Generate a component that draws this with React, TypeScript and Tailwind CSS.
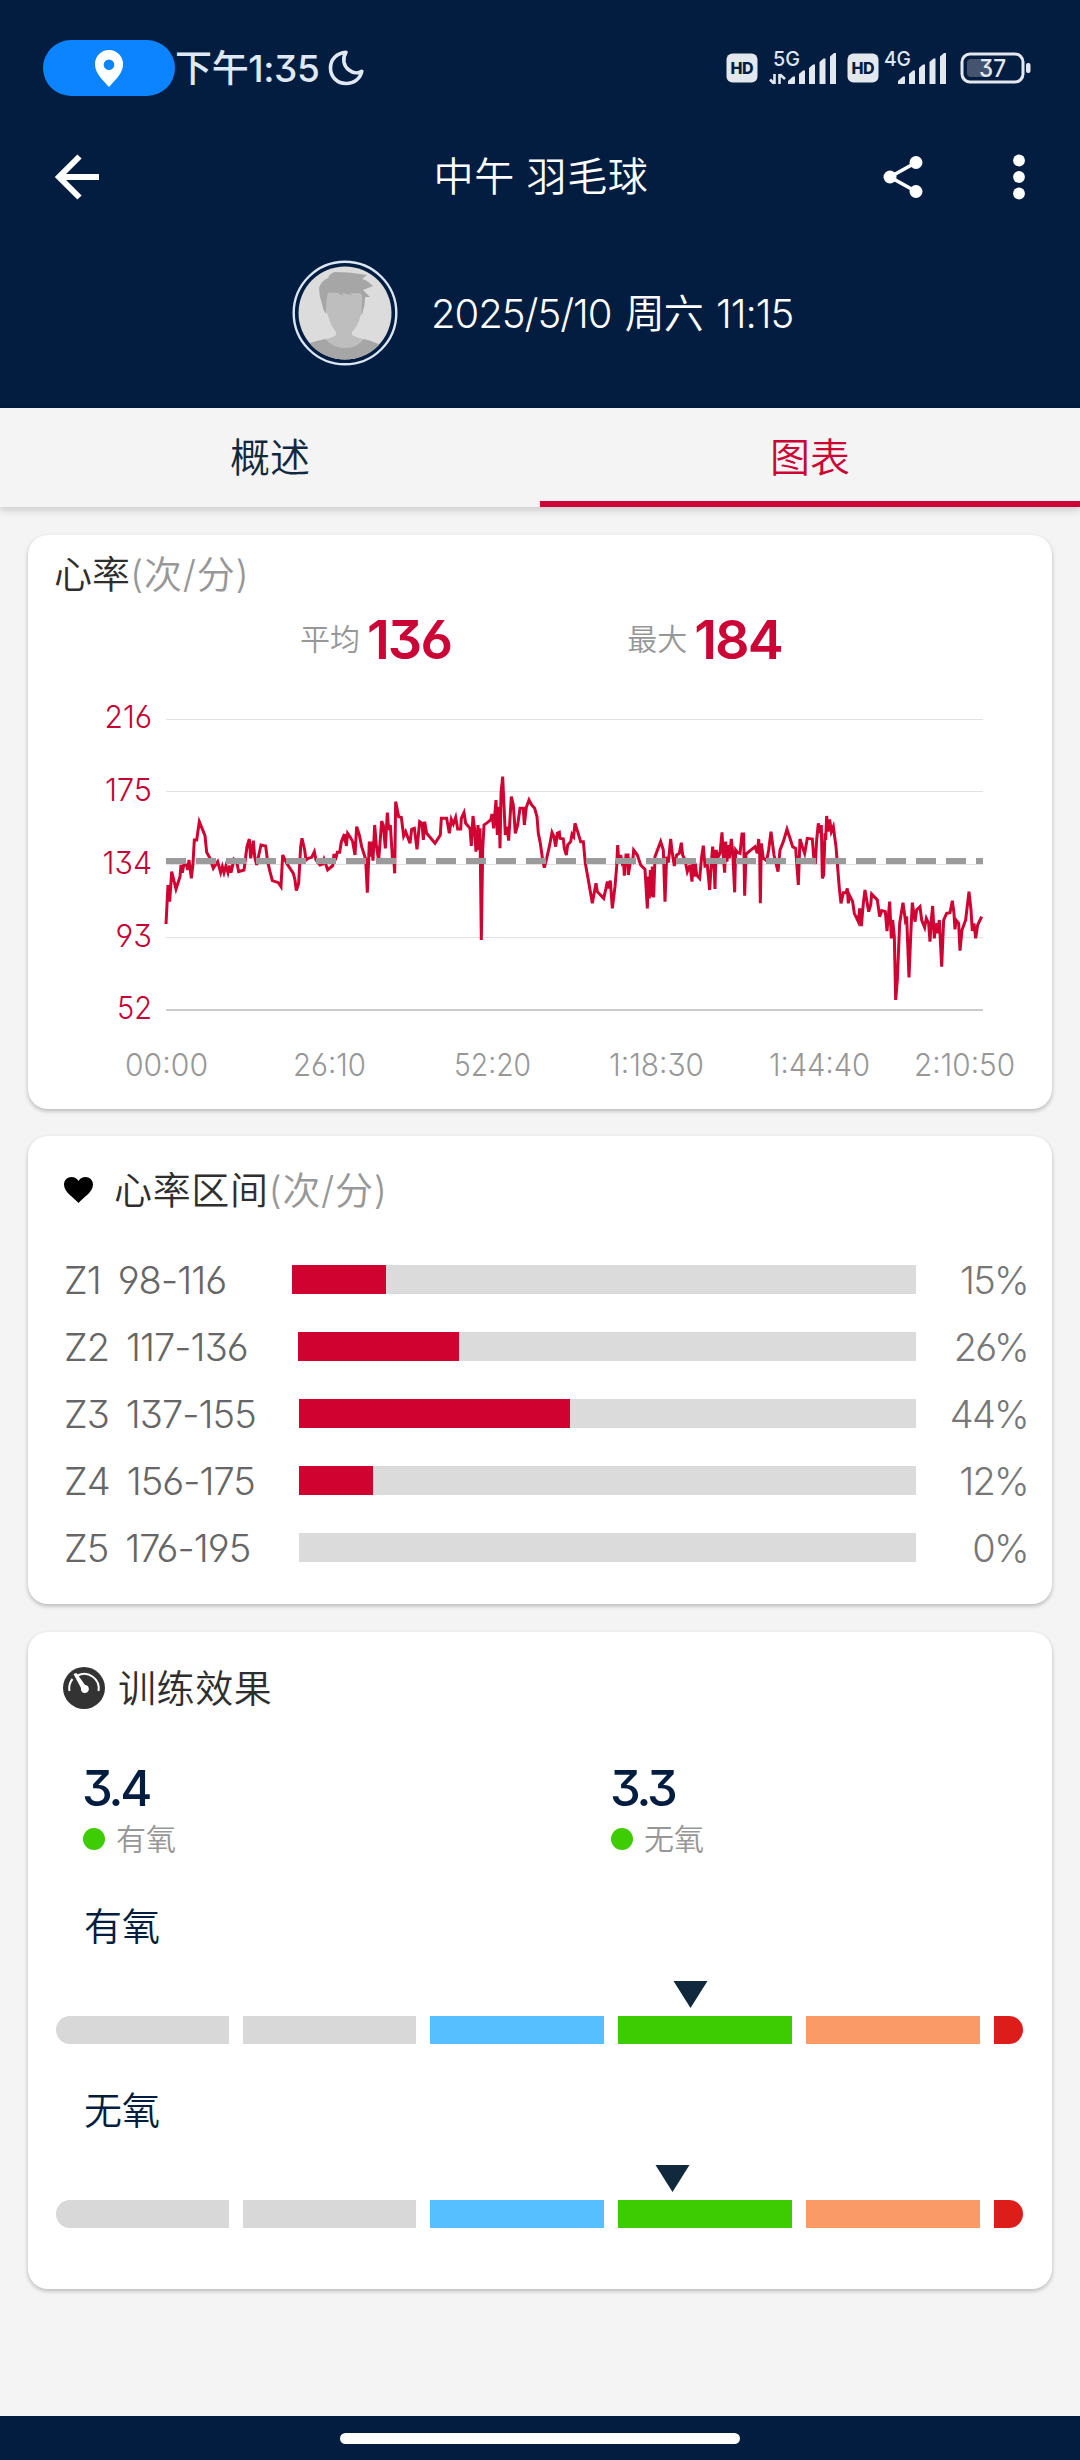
import React from 'react';

const zones = [
  { name: 'Z1', range: '98-116', percent: 15, gap: 'ml-[33px]' },
  { name: 'Z2', range: '117-136', percent: 26, gap: 'ml-[39px]' },
  { name: 'Z3', range: '137-155', percent: 44, gap: 'ml-10' },
  { name: 'Z4', range: '156-175', percent: 12, gap: 'ml-10' },
  { name: 'Z5', range: '176-195', percent: 0, gap: 'ml-10' }
];

const yTicks = [
  { label: '216', line: 719.5, base: 728, width: 47.5 },
  { label: '175', line: 791.5, base: 801, width: 47 },
  { label: '134', line: 864.5, base: 874, width: 49.5 },
  { label: '93', line: 937.5, base: 947, width: 36.5 },
  { label: '52', line: 1010, base: 1019, width: 35 }
];

const xTicks = [
  { label: '00:00', x: 125, width: 83 },
  { label: '26:10', x: 293, width: 73 },
  { label: '52:20', x: 454, width: 77 },
  { label: '1:18:30', x: 609, width: 95 },
  { label: '1:44:40', x: 769, width: 101 },
  { label: '2:10:50', x: 914, width: 101 }
];

// heart rate samples, three units per pixel
const heartRate = `
198,702 204,585 209,635 215,545 228,597 240,560 243,525 247,548 252,522 260,525 263,540 267,510 274,565 279,520
283,450 290,450 298,395 315,437 320,487 330,505 340,535 353,515 362,548 367,530 372,548 378,527 384,548 389,527
393,548 402,508 410,515 416,545 432,540 441,470 448,447 452,505 460,452 464,500 470,525 483,465 497,468 503,515
510,545 517,572 535,578 543,590 548,495 560,520 580,550 585,570 589,602 596,580 602,470 606,445 614,480 618,510
625,505 635,502 643,485 648,510 660,525 668,522 672,508 678,525 683,540 698,527 702,492 706,510 712,487 719,487
724,455 730,440 734,450 737,432 739,468 743,430 750,440 758,455 765,495 770,410 778,435 785,470 797,508 802,608
808,455 811,500 814,455 819,512 824,405 829,465 836,512 845,393 850,405 856,475 862,368 866,420 871,405 878,515
880,480 884,550 887,335 896,380 904,382 911,438 917,425 930,460 935,418 943,415 951,478 959,395 966,400 970,450
974,395 980,430 1005,460 1021,435 1024,385 1040,385 1048,430 1054,388 1060,402 1067,382 1073,417 1082,417
1084,385 1092,368 1097,400 1110,415 1114,468 1119,378 1123,410 1128,485 1134,405 1137,480 1140,415 1144,750
1148,480 1152,405 1162,398 1172,390 1176,372 1181,415 1188,330 1192,435 1197,350 1200,475 1203,310 1208,260
1216,435 1221,410 1226,452 1234,320 1240,345 1246,430 1253,405 1260,355 1270,355 1273,405 1279,352 1287,330
1295,345 1304,355 1311,380 1315,430 1321,460 1328,510 1333,533 1340,505 1348,470 1356,427 1362,440 1367,470
1372,430 1378,427 1380,445 1390,447 1393,475 1399,495 1403,465 1412,455 1416,433 1421,440 1425,400 1433,425
1442,455 1450,455 1456,520 1465,570 1477,640 1488,580 1492,605 1511,625 1518,595 1522,575 1526,595 1531,572
1537,655 1545,590 1550,530 1553,465 1557,520 1562,495 1566,515 1570,505 1573,557 1578,495 1584,495 1585,555
1592,510 1598,515 1601,480 1612,495 1622,525 1635,538 1642,655 1645,560 1648,625 1651,540 1654,620 1657,530
1661,622 1665,500 1682,455 1690,480 1695,635 1700,500 1705,518 1712,447 1717,490 1723,528 1730,495 1738,490
1744,458 1748,495 1755,510 1762,545 1770,525 1776,575 1779,510 1783,560 1786,520 1790,555 1799,565 1805,500
1810,467 1815,528 1822,525 1829,600 1834,520 1838,470 1841,500 1845,597 1848,480 1855,500 1860,490 1866,427
1870,500 1874,548 1877,455 1881,515 1885,465 1888,505 1894,447 1898,485 1904,607 1907,480 1912,487 1920,490
1926,432 1931,432 1934,617 1938,492 1965,470 1972,490 1976,447 1979,490 1981,640 1984,460 1990,505 2000,512
2006,480 2013,425 2022,495 2034,545 2040,480 2050,455 2061,418 2070,445 2078,470 2087,475 2095,585 2100,447
2107,470 2114,490 2122,445 2137,447 2141,500 2146,522 2150,450 2155,400 2160,430 2164,405 2167,565 2171,555
2175,430 2177,450 2180,378 2184,425 2189,388 2194,425 2200,410 2208,470 2212,520 2218,595 2223,640 2230,608
2238,608 2242,595 2245,640 2248,615 2258,635 2263,670 2275,695 2279,655 2284,708 2290,640 2295,600 2306,665
2312,645 2315,612 2332,630 2339,680 2345,662 2356,665 2361,723 2369,635 2374,745 2378,690 2383,740 2387,930
2392,870 2399,700 2409,638 2416,690 2420,680 2427,862 2432,740 2437,638 2445,695 2450,660 2460,650 2465,690
2474,712 2479,685 2486,700 2490,755 2494,690 2498,648 2503,745 2507,700 2512,730 2518,690 2525,830 2531,690
2540,670 2550,668 2557,632 2562,670 2565,718 2568,690 2576,700 2580,782 2586,720 2597,690 2607,605 2613,660
2617,723 2622,700 2627,745 2633,705 2645,680`;

function HdBadge() {
  return (
    <svg width="32" height="30" viewBox="0 0 32 30">
      <rect x="0.5" y="0.5" width="31" height="29" rx="6" fill="#e3e8ee" />
      <text x="4.5" y="20.5" fontSize="16" fontWeight="800" textLength="23" fill="#041d40">HD</text>
    </svg>
  );
}

function SignalBars({ label, data }: { label: string; data?: boolean }) {
  return (
    <svg width="68" height="48" viewBox="0 -6 68 48">
      <text x={data ? 4 : 5} y="16" fontSize="20.5" fontWeight="500" textLength="27" lengthAdjust="spacingAndGlyphs" fill="#dfe8f4">
        {label}
      </text>
      {data && <path d="M5.500 24v10M5 33.500L1 29.500M10.500 34V24M11 24.500l5 4.500" stroke="#e3e8ee" strokeWidth="2.600" fill="none" />}
      <g fill="#e3e8ee">
        <path d="M19 34V31l5-4.500h2V33a1 1 0 0 1-1 1z" />
        <path d="M30 34V24l4-3.500h2V34z" />
        <path d="M40 34V18l4-3.500h2V34z" />
        <path d="M50.500 34V12l4-3.500h2V34z" />
        <path d="M61 34V6.500L65 3h2V34z" />
      </g>
    </svg>
  );
}

function StatusBar() {
  return (
    <div className="flex h-[136px] items-center justify-between pl-[43px] pr-[48px]">
      <div className="flex items-center">
        <div className="flex h-14 w-[132px] items-center justify-center rounded-full bg-[#0d84ff]">
          <svg width="28" height="37" viewBox="0 0 28 37">
            <path
              d="M14 0a14 14 0 0 1 14 14.500c0 9-8 15.500-14 22.500C8 30 0 23.500 0 14.500A14 14 0 0 1 14 0zm0 9.500a5.300 5.300 0 1 0 0 10.600 5.300 5.300 0 0 0 0-10.600z"
              fill="#fff"
            />
          </svg>
        </div>
        <span className="text-[37px] leading-none font-medium tracking-[-0.01em] text-[#dfe8f4]">下午1:35</span>
        <svg className="ml-2" width="36" height="36" viewBox="0 0 36 36">
          <path
            d="M18 2.200C8.500 3 2.500 9.500 2.500 18c0 9 7 15.500 15.500 15.500 8 0 14.500-5 15.800-12.300-3.300 2.300-8.300 2.300-12.800-1.200-5.500-4-7-11.500-3-17.800z"
            fill="none"
            stroke="#dfe8f4"
            strokeWidth="3.600"
            strokeLinejoin="round"
          />
        </svg>
      </div>
      <div className="flex items-center">
        <HdBadge />
        <div className="ml-[11px]">
          <SignalBars label="5G" data />
        </div>
        <div className="ml-[10px]">
          <HdBadge />
        </div>
        <SignalBars label="4G" />
        <svg className="ml-[13px]" width="72" height="32" viewBox="0 0 72 32">
          <rect x="2" y="2" width="61" height="28" rx="8" fill="none" stroke="#e3e8ee" strokeWidth="3" />
          <path d="M11 7h19v18H11a4 4 0 0 1-4-4V11a4 4 0 0 1 4-4z" fill="#44546f" />
          <rect x="66" y="11" width="4.500" height="10" rx="2" fill="#e3e8ee" />
          <text x="19" y="25" fontSize="24.500" fontWeight="500" textLength="27" lengthAdjust="spacingAndGlyphs" fill="#e3e8ee">37</text>
        </svg>
      </div>
    </div>
  );
}

function Avatar() {
  return (
    <svg width="106" height="106" viewBox="0 0 106 106">
      <defs>
        <clipPath id="face">
          <circle cx="53" cy="53" r="46.500" />
        </clipPath>
      </defs>
      <circle cx="53" cy="53" r="51.300" fill="none" stroke="#dbe6f4" strokeWidth="2.400" />
      <g clipPath="url(#face)">
        <rect width="106" height="106" fill="#dcdcdc" />
        <path d="M6 106V88Q18 82 33 79H72Q82 81 98 90V106z" fill="#a6a6a6" />
        <path
          d="M34 30H71V54Q69 54 68.500 56Q66 66 60 72V75Q65 78 72 79Q65 88 53 88Q41 88 33 79Q40 78 44 75V72Q38 65 36 55L34 52z"
          fill="#bebebe"
        />
        <path
          d="M34 54Q31 50 30 44Q27 36 27 28Q29 21 36 18Q38 13 43 12Q58 12 68 14L75 15L70 19Q75 20 81 26L71 30Q74 33 78 37L73 37Q73 48 69.500 54Q70 44 70 35Q69 33 66 33L58 33L60 35Q55 34 50 33L51 36L46 33Q40 32 36 33Q34 36 34 54z"
          fill="#a6a6a6"
        />
      </g>
    </svg>
  );
}

function Header() {
  return (
    <header className="h-[408px] bg-[#021d40] text-white">
      <StatusBar />
      <div className="flex h-[82px] items-center px-[54px]">
        <svg width="46" height="46" viewBox="0 0 46 46">
          <path d="M45 23H6M25.500 2.500L5 23l20.500 20.500" fill="none" stroke="#fff" strokeWidth="6" />
        </svg>
        <h1 className="ml-[99px] flex-1 text-center text-[40px] leading-none tracking-[0.015em]">中午 羽毛球</h1>
        <svg width="40" height="44" viewBox="0 0 40 44">
          <path d="M33 7.500L7 22l26 14.500" fill="none" stroke="#fff" strokeWidth="3.600" />
          <circle cx="33" cy="7.500" r="6.500" fill="#fff" />
          <circle cx="7" cy="22" r="6.500" fill="#fff" />
          <circle cx="33" cy="36.500" r="6.500" fill="#fff" />
        </svg>
        <svg className="ml-[89px]" width="14" height="46" viewBox="0 0 14 46">
          <circle cx="7" cy="6.500" r="5.900" fill="#fff" />
          <circle cx="7" cy="23" r="5.900" fill="#fff" />
          <circle cx="7" cy="39.500" r="5.900" fill="#fff" />
        </svg>
      </div>
      <div className="flex h-[190px] items-center pl-[292px]">
        <Avatar />
        <span className="ml-[33px] pt-0.5 text-[40px] leading-none tracking-[-0.025em] [word-spacing:3px] whitespace-nowrap">
          2025/5/10 周六 11:15
        </span>
      </div>
    </header>
  );
}

function Tabs() {
  return (
    <nav className="flex h-[99px] text-[40px] leading-none shadow-[0_3px_8px_rgba(0,0,0,0.18)]">
      <div className="flex flex-1 items-center justify-center text-[#10293f]">概述</div>
      <div className="flex flex-1 flex-col text-[#cc0537]">
        <div className="flex flex-1 items-center justify-center pt-1.5">图表</div>
        <div className="h-1.5 bg-[#cc0537]" />
      </div>
    </nav>
  );
}

function Card({ className, children }: { className: string; children: React.ReactNode }) {
  return (
    <section className={`mx-7 rounded-[20px] bg-white shadow-[0_2px_4px_rgba(0,0,0,0.25)] ${className}`}>{children}</section>
  );
}

function HeartRateChart() {
  return (
    <svg className="block" width="1024" height="410" viewBox="28 690 1024 410">
      {yTicks.map((tick) => (
        <g key={tick.label}>
          <line x1="166" x2="983" y1={tick.line} y2={tick.line} stroke={tick.label === '52' ? '#cbcbcb' : '#e1e1e1'} strokeWidth={tick.label === '52' ? 2 : 1} />
          <text x={152 - tick.width} y={tick.base} fontSize="31" textLength={tick.width} lengthAdjust="spacingAndGlyphs" fill="#c40336">
            {tick.label}
          </text>
        </g>
      ))}
      <polyline points={heartRate} transform="translate(100 690) scale(0.33333)" fill="none" stroke="#d00433" strokeWidth="9" />
      <line x1="166" x2="983" y1="861" y2="861" stroke="#9b9b9b" strokeWidth="6" strokeDasharray="20 10" />
      {xTicks.map((tick) => (
        <text key={tick.label} x={tick.x} y="1076" fontSize="31" textLength={tick.width} lengthAdjust="spacingAndGlyphs" fill="#979797">
          {tick.label}
        </text>
      ))}
    </svg>
  );
}

function Stat({ label, value }: { label: string; value: string }) {
  return (
    <div className="flex w-[329px] items-center justify-center">
      <span className="text-[30px] leading-none text-[#979797]">{label}</span>
      <span className="ml-[7px] pt-0.5 text-[54px] leading-none font-[570] tracking-[-0.035em] text-[#cc0537]">{value}</span>
    </div>
  );
}

function EffectValue({ value, label }: { value: string; label: string }) {
  return (
    <div className="flex-1">
      <div className="-ml-px text-[49px] leading-[56px] font-medium tracking-[-0.065em] text-[#021d40]">{value}</div>
      <div className="mt-0.5 flex h-[40px] items-center">
        <span className="h-[22px] w-[22px] rounded-full bg-[#3ecc02]" />
        <span className="ml-[11px] text-[30px] leading-none text-[#979797]">{label}</span>
      </div>
    </div>
  );
}

function EffectScale({ label, marker }: { label: string; marker: number }) {
  return (
    <div className="h-[184px] pl-7 pr-[29px]">
      <h3 className="h-[74px] pl-[28px] text-[38px] leading-[38px] text-[#021d40]">{label}</h3>
      <svg className="block" width="967" height="27" viewBox="0 0 967 27">
        <path d={`M${marker - 17} 0h34l-17 27z`} fill="#10293d" />
      </svg>
      <div className="mt-2 flex h-7 gap-3.5">
        <div className="w-[173px] rounded-l-full bg-[#d8d8d8]" />
        <div className="w-[173px] bg-[#d8d8d8]" />
        <div className="w-[174px] bg-[#55bfff]" />
        <div className="w-[174px] bg-[#3dcc02]" />
        <div className="w-[174px] bg-[#fa9a66]" />
        <div className="w-[29px] rounded-r-full bg-[#dc1d19]" />
      </div>
    </div>
  );
}

export default function App() {
  return (
    <div className="flex h-[2460px] w-[1080px] flex-col bg-[#f4f4f4] font-['Inter','Noto_Sans_CJK_SC',sans-serif] font-[350] [font-feature-settings:'cv03','cv04','cv09']">
      <Header />
      <Tabs />
      <Card className="mt-7 h-[574px]">
        <h2 className="h-[62px] pt-[20px] pl-[26px] text-[38px] leading-[38px] text-[#2e2e2e]">
          心率<span className="tracking-[0.02em] text-[#979797]">(次/分)</span>
        </h2>
        <div className="flex h-[93px] justify-center pb-[9px]">
          <Stat label="平均" value="136" />
          <Stat label="最大" value="184" />
        </div>
        <HeartRateChart />
      </Card>
      <Card className="mt-[27px] h-[468px]">
        <div className="mb-0.5 flex h-[108px] items-center pl-9">
          <svg width="29" height="26" viewBox="0 0 29 26">
            <path d="M14.500 26C10 20.500 0 15.500 0 7.500 0 3 3.500 0 7.500 0c3 0 5.500 1.500 7 4 1.500-2.500 4-4 7-4C25.500 0 29 3 29 7.500c0 8-10 13-14.500 18.500z" />
          </svg>
          <h2 className="ml-[21px] text-[38px] leading-none tracking-[0.017em] text-[#2e2e2e]">
            心率区间<span className="text-[#979797]">(次/分)</span>
          </h2>
        </div>
        {zones.map((zone) => (
          <div key={zone.name} className="flex h-[67px] items-center pr-[24px] pl-9 text-[38px] leading-none text-[#666]">
            <span className="w-[195px] shrink-0 tracking-[-0.025em] whitespace-nowrap">
              {zone.name}
              <span className="ml-[17px]">{zone.range}</span>
            </span>
            <div className={`h-[29px] flex-1 bg-[#dbdbdb] ${zone.gap}`}>
              <div className="h-full bg-[#d00330]" style={{ width: `${zone.percent}%` }} />
            </div>
            <span className="w-[112px] text-right tracking-[-0.045em] text-[#777]">{zone.percent}%</span>
          </div>
        ))}
      </Card>
      <Card className="mt-7 h-[657px]">
        <div className="flex h-[112px] items-center pl-[35px]">
          <svg width="42" height="42" viewBox="0 0 42 42">
            <circle cx="21" cy="21" r="21" fill="#333" />
            <path d="M6.500 24A14.600 14.600 0 0 1 9.500 12M14.500 8.500A14.600 14.600 0 0 1 35.500 24" fill="none" stroke="#fff" strokeWidth="2" />
            <path d="M10.500 7l3-1 8.500 12a4 4 0 1 1-4 3z" fill="#fff" />
          </svg>
          <h2 className="ml-[13px] text-[38px] leading-none tracking-[0.015em] text-[#2e2e2e]">训练效果</h2>
        </div>
        <div className="grid h-[163px] grid-cols-[528px_1fr] pt-[17px] pl-[55px]">
          <EffectValue value="3.4" label="有氧" />
          <EffectValue value="3.3" label="无氧" />
        </div>
        <EffectScale label="有氧" marker={634.5} />
        <EffectScale label="无氧" marker={616.5} />
      </Card>
      <footer className="mt-auto flex h-11 items-center justify-center bg-[#021d40]">
        <div className="h-[11px] w-[400px] rounded-full bg-white" />
      </footer>
    </div>
  );
}
